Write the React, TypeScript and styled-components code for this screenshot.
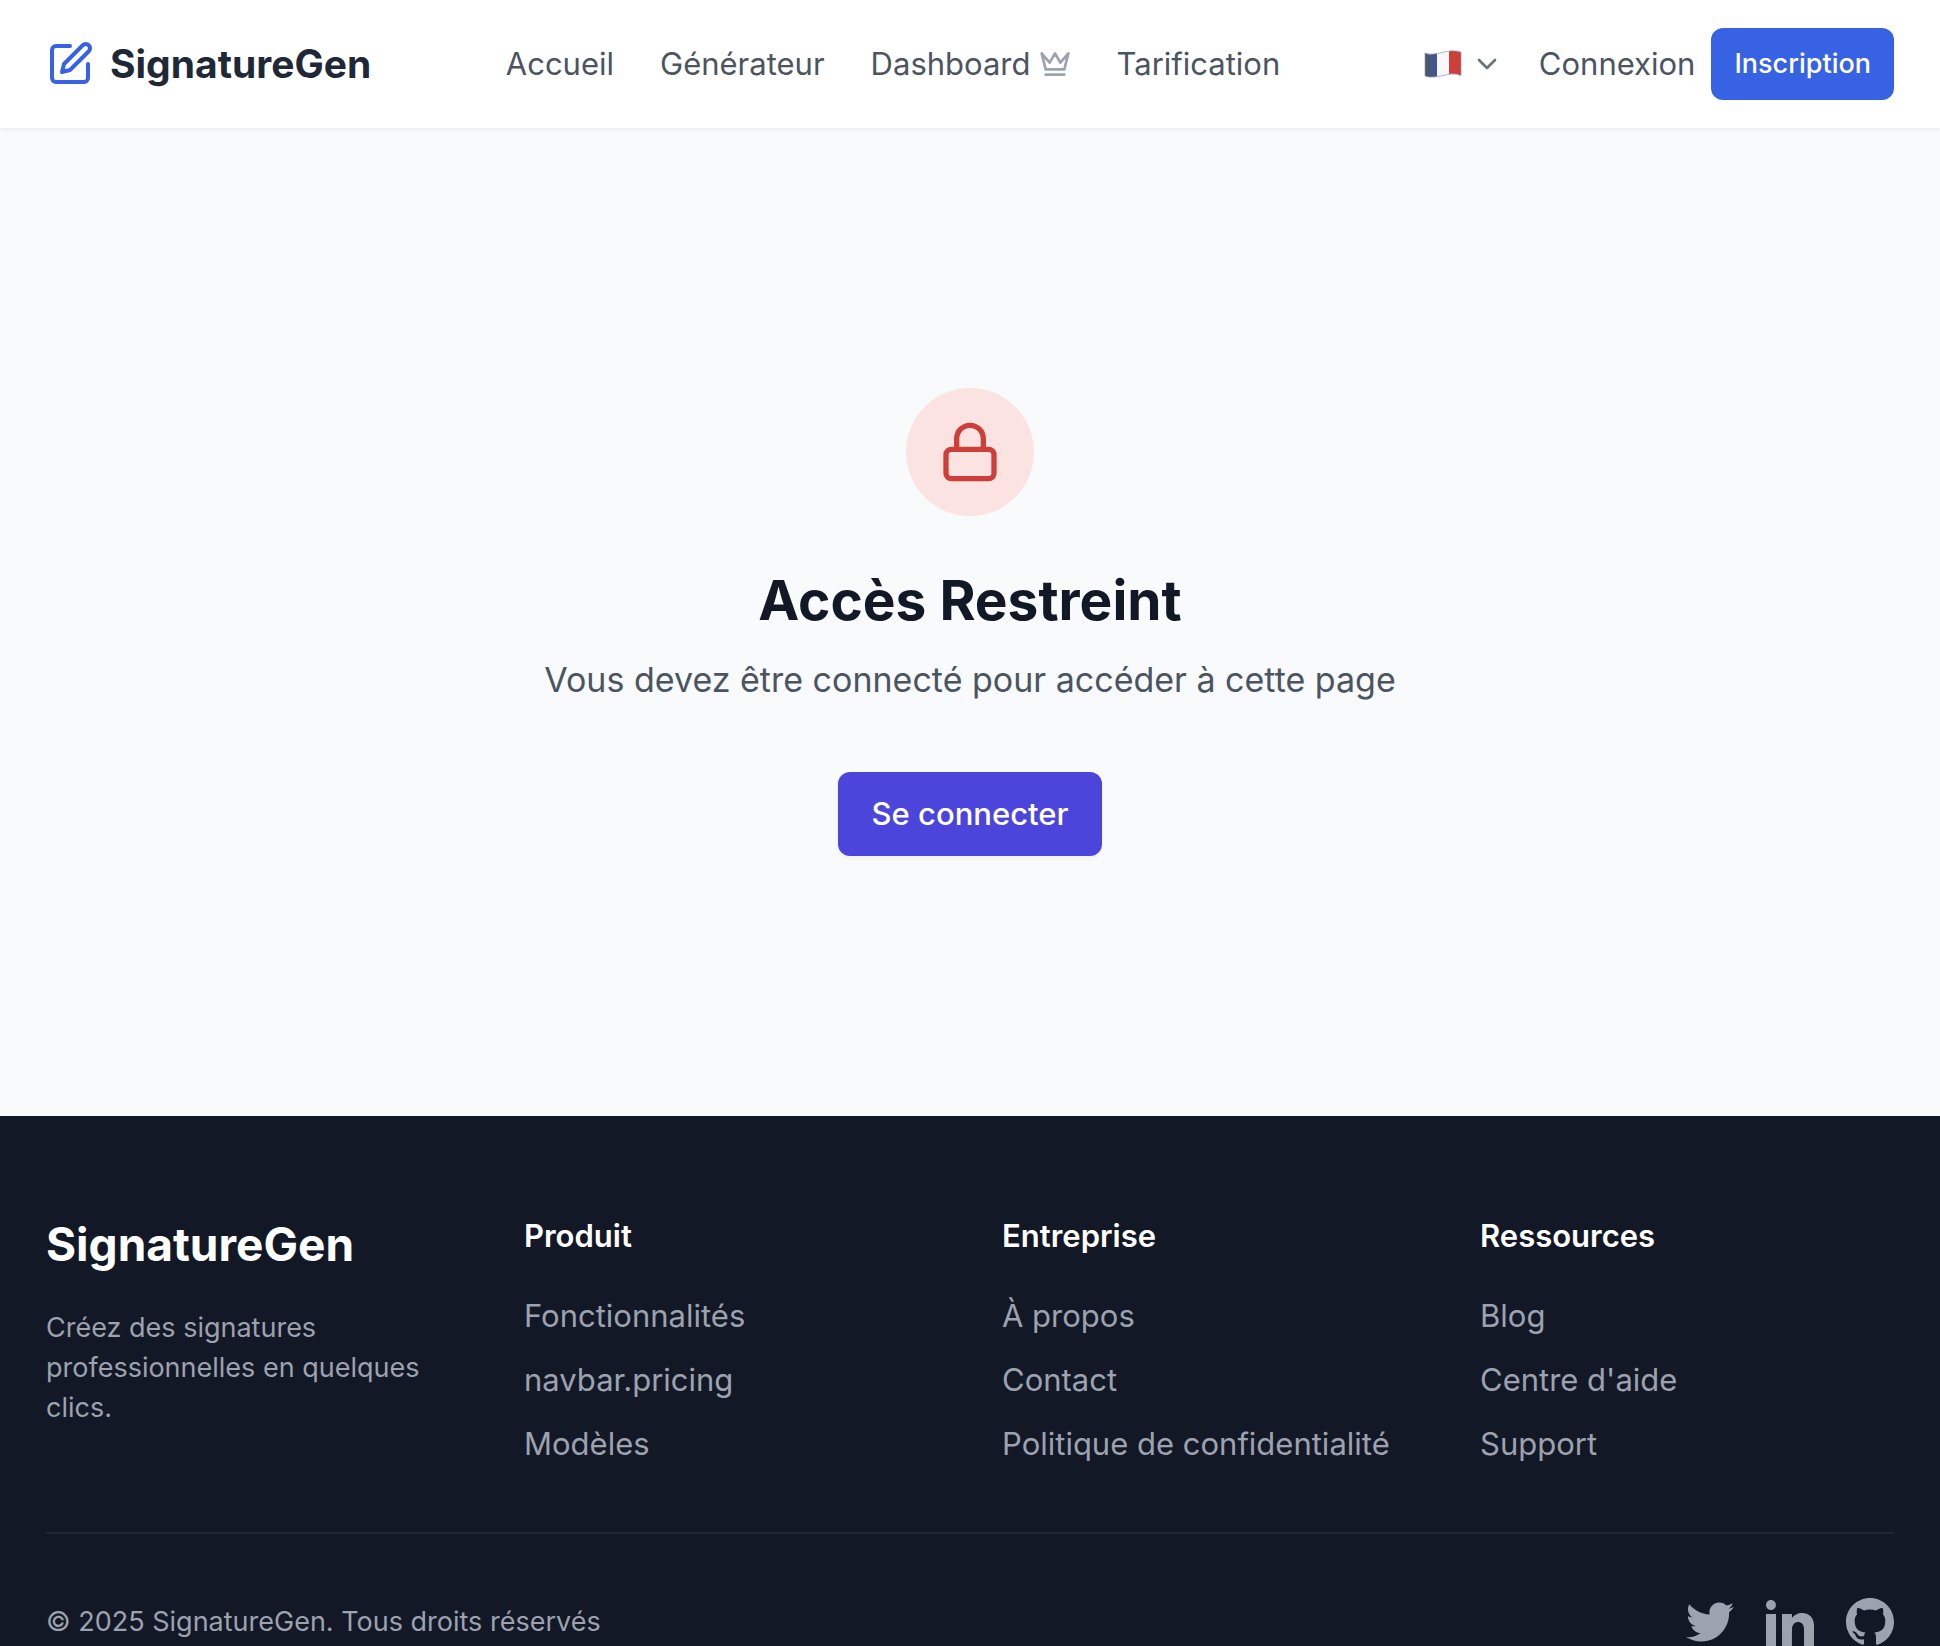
import React from "react";
import styled, { createGlobalStyle } from "styled-components";

const color = {
  ink: "#121826",
  heading: "#1f2836",
  text: "#4b5562",
  muted: "#9ca2ae",
  chevron: "#6b7280",
  line: "#1f2836",
  page: "#f9fafc",
  blue: "#3662e3",
  indigo: "#4c45dc",
  red: "#cc4039",
  pink: "#fae3e1",
};

const GlobalStyle = createGlobalStyle`
  *, *::before, *::after { box-sizing: border-box; }
  body {
    margin: 0;
    background: ${color.page};
    font-family: Inter, "Noto Sans", sans-serif;
    font-size: 31px;
    line-height: 48px;
    color: ${color.text};
  }
  a { color: inherit; text-decoration: none; }
  button { font-family: inherit; cursor: pointer; border: 0; }
  h2, h3, p, ul { margin: 0; padding: 0; }
  ul { list-style: none; }
  svg { display: block; flex: none; }
`;

const Header = styled.header`
  position: relative;
  display: flex;
  align-items: center;
  justify-content: space-between;
  min-height: 128px;
  padding: 0 46px;
  background: #ffffff;
  box-shadow: 0 2px 4px rgba(0, 0, 0, 0.05);
`;

const Brand = styled.a`
  display: flex;
  align-items: center;
  gap: 16px;
  font-size: 39px;
  font-weight: 700;
  color: ${color.heading};
`;

const Nav = styled.nav`
  display: flex;
  align-items: center;
  gap: 46px;
  margin-right: 8px;
`;

const NavLink = styled.a`
  display: flex;
  align-items: center;
  gap: 8px;
`;

const Actions = styled.div`
  display: flex;
  align-items: center;
  gap: 16px;
`;

const LanguageButton = styled.button`
  display: flex;
  align-items: center;
  gap: 8px;
  margin-right: 20px;
  padding: 0;
  background: transparent;
`;

const Button = styled.a<{ $large?: boolean }>`
  display: inline-flex;
  align-items: center;
  justify-content: center;
  min-height: ${(p) => (p.$large ? "84px" : "72px")};
  padding: 0 ${(p) => (p.$large ? "34px" : "23px")};
  border-radius: 12px;
  background: ${(p) => (p.$large ? color.indigo : color.blue)};
  box-shadow: ${(p) => (p.$large ? "0 2px 4px rgba(0, 0, 0, 0.05)" : "none")};
  font-size: ${(p) => (p.$large ? "31px" : "27px")};
  font-weight: 500;
  color: #ffffff;
`;

const Main = styled.main`
  display: flex;
  flex-direction: column;
  align-items: center;
  padding: 260px 48px;
  text-align: center;
`;

const Badge = styled.div`
  display: flex;
  align-items: center;
  justify-content: center;
  width: 128px;
  height: 128px;
  margin-bottom: 48px;
  border-radius: 50%;
  background: ${color.pink};
  color: ${color.red};
`;

const Title = styled.h2`
  margin-bottom: 16px;
  font-size: 55px;
  line-height: 72px;
  font-weight: 700;
  color: ${color.ink};
`;

const Message = styled.p`
  margin-bottom: 64px;
  font-size: 34px;
  line-height: 56px;
`;

const Footer = styled.footer`
  padding: 96px 46px 0;
  background: ${color.ink};
  color: ${color.muted};
`;

const Columns = styled.div`
  display: grid;
  grid-template-columns: repeat(4, minmax(0, 1fr));
  gap: 64px;
`;

const FooterBrand = styled.h2`
  margin-bottom: 32px;
  font-size: 46px;
  line-height: 64px;
  font-weight: 700;
  color: #ffffff;
`;

const Small = styled.p`
  font-size: 27px;
  line-height: 40px;
`;

const ColumnTitle = styled.h3`
  margin-bottom: 32px;
  font-size: 31px;
  line-height: 48px;
  font-weight: 600;
  color: #ffffff;
`;

const LinkList = styled.ul`
  display: flex;
  flex-direction: column;
  gap: 16px;
  white-space: nowrap;
`;

const Bottom = styled.div`
  display: flex;
  align-items: center;
  justify-content: space-between;
  margin-top: 64px;
  padding-top: 64px;
  border-top: 2px solid ${color.line};
`;

const Socials = styled.div`
  display: flex;
  gap: 32px;
`;

interface LineIconProps {
  size: number;
  stroke?: string;
  children: React.ReactNode;
}

const LineIcon = ({ size, stroke = "currentColor", children }: LineIconProps) => (
  <svg
    width={size}
    height={size}
    viewBox="0 0 24 24"
    fill="none"
    stroke={stroke}
    strokeWidth="2"
    strokeLinecap="round"
    strokeLinejoin="round"
    aria-hidden="true"
  >
    {children}
  </svg>
);

const FrenchFlag = () => (
  <svg width="40" height="32" viewBox="0 0 40 32" aria-hidden="true">
    <path d="M2 5C4 6 5 6.200 7 6.300V29C5 29 4 28.600 2 28Z" fill="#4b5768" />
    <path d="M7 6.300C9 6.300 11 6 14 5.500V28.600C11 29 9 29.100 7 29Z" fill="#43558f" />
    <path d="M14 5.500C18 4.800 22 3.800 26 3.300V26C22 26.600 18 28 14 28.600Z" fill="#f8f8fa" />
    <path d="M26 3.300C30 2.700 34 2.900 38 4.200V27.500C34 25.900 30 25.500 26 26Z" fill="#cc4039" />
    <path
      d="M2 5C14 9.500 26 -1 38 4.200V27.500C26 22.500 14 32.500 2 28Z"
      fill="none"
      stroke="#8d95a3"
      strokeWidth="0.700"
    />
  </svg>
);

const columns = [
  { title: "Produit", links: ["Fonctionnalités", "navbar.pricing", "Modèles"] },
  { title: "Entreprise", links: ["À propos", "Contact", "Politique de confidentialité"] },
  { title: "Ressources", links: ["Blog", "Centre d'aide", "Support"] },
];

const socials = [
  {
    name: "Twitter",
    path: "M24 4.557c-.883.392-1.832.656-2.828.775 1.017-.609 1.798-1.574 2.165-2.724-.951.564-2.005.974-3.127 1.195-.897-.957-2.178-1.555-3.594-1.555-3.179 0-5.515 2.966-4.797 6.045-4.091-.205-7.719-2.165-10.148-5.144-1.29 2.213-.669 5.108 1.523 6.574-.806-.026-1.566-.247-2.229-.616-.054 2.281 1.581 4.415 3.949 4.89-.693.188-1.452.232-2.224.084.626 1.956 2.444 3.379 4.6 3.419-2.07 1.623-4.678 2.348-7.29 2.04 2.179 1.397 4.768 2.212 7.548 2.212 9.142 0 14.307-7.721 13.995-14.646.962-.695 1.797-1.562 2.457-2.549z",
  },
  {
    name: "LinkedIn",
    path: "M4.98 3.5c0 1.381-1.11 2.5-2.48 2.5s-2.48-1.119-2.48-2.5c0-1.38 1.11-2.5 2.48-2.5s2.48 1.12 2.48 2.5zm.02 4.5h-5v16h5v-16zm7.982 0h-4.968v16h4.969v-8.399c0-4.67 6.029-5.052 6.029 0v8.399h4.988v-10.131c0-7.88-8.922-7.593-11.018-3.714v-2.155z",
  },
  {
    name: "GitHub",
    path: "M12 0c-6.626 0-12 5.373-12 12 0 5.302 3.438 9.8 8.207 11.387.599.111.793-.261.793-.577v-2.234c-3.338.726-4.033-1.416-4.033-1.416-.546-1.387-1.333-1.756-1.333-1.756-1.089-.745.083-.729.083-.729 1.205.084 1.839 1.237 1.839 1.237 1.07 1.834 2.807 1.304 3.492.997.107-.775.418-1.305.762-1.604-2.665-.305-5.467-1.334-5.467-5.931 0-1.311.469-2.381 1.236-3.221-.124-.303-.535-1.524.117-3.176 0 0 1.008-.322 3.301 1.23.957-.266 1.983-.399 3.003-.404 1.02.005 2.047.138 3.006.404 2.291-1.552 3.297-1.23 3.297-1.23.653 1.653.242 2.874.118 3.176.77.84 1.235 1.911 1.235 3.221 0 4.609-2.807 5.624-5.479 5.921.43.372.823 1.102.823 2.222v3.293c0 .319.192.694.801.576 4.765-1.589 8.199-6.086 8.199-11.386 0-6.627-5.373-12-12-12z",
  },
];

export default function App() {
  return (
    <>
      <GlobalStyle />
      <Header>
        <Brand href="#">
          <LineIcon size={48} stroke={color.blue}>
            <path d="M12 3H5a2 2 0 0 0-2 2v14a2 2 0 0 0 2 2h14a2 2 0 0 0 2-2v-7" />
            <path d="M18.375 2.625a2.121 2.121 0 1 1 3 3L12 15l-4 1 1-4Z" />
          </LineIcon>
          SignatureGen
        </Brand>
        <Nav>
          <NavLink href="#">Accueil</NavLink>
          <NavLink href="#">Générateur</NavLink>
          <NavLink href="#">
            Dashboard
            <LineIcon size={32} stroke={color.muted}>
              <path d="m2 4 3 12h14l3-12-6 7-4-7-4 7-6-7zm3 16h14" />
            </LineIcon>
          </NavLink>
          <NavLink href="#">Tarification</NavLink>
        </Nav>
        <Actions>
          <LanguageButton type="button" aria-label="Français">
            <FrenchFlag />
            <LineIcon size={32} stroke={color.chevron}>
              <path d="m6 9 6 6 6-6" />
            </LineIcon>
          </LanguageButton>
          <NavLink href="#">Connexion</NavLink>
          <Button href="#">Inscription</Button>
        </Actions>
      </Header>
      <Main>
        <Badge>
          <LineIcon size={64}>
            <rect width="18" height="11" x="3" y="11" rx="2" ry="2" />
            <path d="M7 11V7a5 5 0 0 1 10 0v4" />
          </LineIcon>
        </Badge>
        <Title>Accès Restreint</Title>
        <Message>Vous devez être connecté pour accéder à cette page</Message>
        <Button href="#" $large>
          Se connecter
        </Button>
      </Main>
      <Footer>
        <Columns>
          <div>
            <FooterBrand>SignatureGen</FooterBrand>
            <Small>Créez des signatures professionnelles en quelques clics.</Small>
          </div>
          {columns.map((column) => (
            <div key={column.title}>
              <ColumnTitle>{column.title}</ColumnTitle>
              <LinkList>
                {column.links.map((link) => (
                  <li key={link}>
                    <a href="#">{link}</a>
                  </li>
                ))}
              </LinkList>
            </div>
          ))}
        </Columns>
        <Bottom>
          <Small>© 2025 SignatureGen. Tous droits réservés</Small>
          <Socials>
            {socials.map((social) => (
              <a key={social.name} href="#" aria-label={social.name}>
                <svg width="48" height="48" viewBox="0 0 24 24" fill="currentColor" aria-hidden="true">
                  <path d={social.path} />
                </svg>
              </a>
            ))}
          </Socials>
        </Bottom>
      </Footer>
    </>
  );
}
